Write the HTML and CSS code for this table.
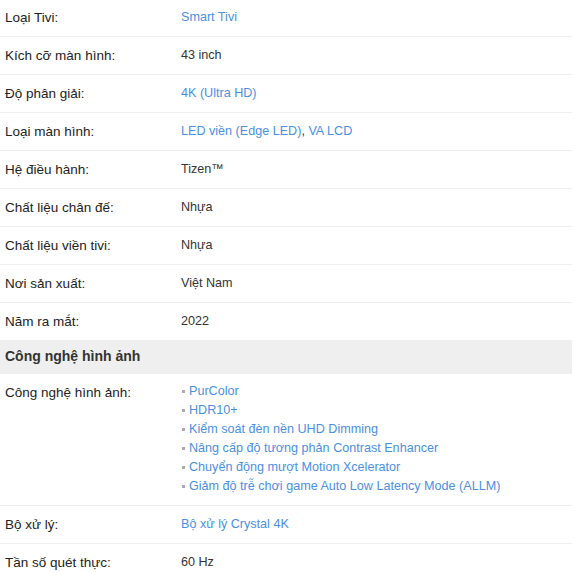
FILE: index.html
```html
<!DOCTYPE html>
<html lang="vi">
<head>
    <meta charset="UTF-8">
    <meta name="viewport" content="width=device-width, initial-scale=1.0">
    <title>Thông số kỹ thuật</title>
    <link rel="stylesheet" href="styles.css">
</head>
<body>
    <div class="specs">
        <table>
            <tbody>
                <tr><td class="label">Loại Tivi:</td><td><a href="#">Smart Tivi</a></td></tr>
                <tr><td class="label">Kích cỡ màn hình:</td><td>43 inch</td></tr>
                <tr><td class="label">Độ phân giải:</td><td><a href="#">4K (Ultra HD)</a></td></tr>
                <tr><td class="label">Loại màn hình:</td><td><a href="#">LED viền (Edge LED)</a>, <a href="#">VA LCD</a></td></tr>
                <tr><td class="label">Hệ điều hành:</td><td>Tizen™</td></tr>
                <tr><td class="label">Chất liệu chân đế:</td><td>Nhựa</td></tr>
                <tr><td class="label">Chất liệu viền tivi:</td><td>Nhựa</td></tr>
                <tr><td class="label">Nơi sản xuất:</td><td>Việt Nam</td></tr>
                <tr class="last"><td class="label">Năm ra mắt:</td><td>2022</td></tr>
            </tbody>
            <tbody>
                <tr class="group"><td colspan="2">Công nghệ hình ảnh</td></tr>
                <tr>
                    <td class="label">Công nghệ hình ảnh:</td>
                    <td>
                        <ul class="features">
                            <li><a href="#">PurColor</a></li>
                            <li><a href="#">HDR10+</a></li>
                            <li><a href="#">Kiểm soát đèn nền UHD Dimming</a></li>
                            <li><a href="#">Nâng cấp độ tương phản Contrast Enhancer</a></li>
                            <li><a href="#">Chuyển động mượt Motion Xcelerator</a></li>
                            <li><a href="#">Giảm độ trễ chơi game Auto Low Latency Mode (ALLM)</a></li>
                        </ul>
                    </td>
                </tr>
                <tr><td class="label">Bộ xử lý:</td><td><a href="#">Bộ xử lý Crystal 4K</a></td></tr>
                <tr><td class="label">Tần số quét thực:</td><td>60 Hz</td></tr>
            </tbody>
        </table>
    </div>
</body>
</html>
```

FILE: styles.css
```css
body {
    font-family: 'Liberation Sans', Arial, sans-serif;
    font-size: 12.6px;
    line-height: 19px;
    color: #333;
    margin: -1px 0 0 0;
    padding: 0;
    background-color: #fff;
}

.specs {
    width: 572px;
}

table {
    width: 100%;
    border-collapse: collapse;
}

table td {
    padding: 9px 5px;
    border-bottom: 1px solid #eee;
    vertical-align: top;
    text-align: left;
}

table tr.last td {
    border-bottom: none;
}

td.label {
    width: 166px;
    font-size: 13.5px;
    color: #222;
}

a {
    color: #4a90e2;
    text-decoration: none;
}

tr.group td {
    background-color: #efefef;
    font-size: 14px;
    font-weight: bold;
    padding: 7px 5px 8px;
    border-bottom: none;
}

.features {
    list-style: none;
    margin: -1px 0 0 0;
    padding: 0;
}

.features li {
    position: relative;
    padding-left: 8px;
}

.features li::before {
    content: "";
    position: absolute;
    left: 1px;
    top: 8px;
    width: 3px;
    height: 3px;
    background-color: #aaa;
}
```
